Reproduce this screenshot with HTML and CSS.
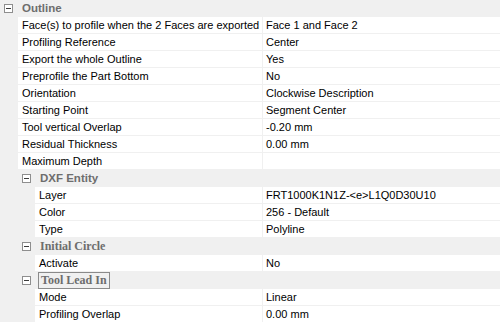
FILE: index.html
```html
<!doctype html>
<html lang="en">
<head>
  <meta charset="utf-8">
  <title>Outline properties</title>
  <link rel="stylesheet" href="styles.css">
</head>
<body>
<div class="grid">
  <div class="cat"><span class="tog"></span><span class="cat-name">Outline</span></div>
  <div class="row"><div class="name">Face(s) to profile when the 2 Faces are exported</div><div class="val">Face 1 and Face 2</div></div>
  <div class="row"><div class="name">Profiling Reference</div><div class="val">Center</div></div>
  <div class="row"><div class="name">Export the whole Outline</div><div class="val">Yes</div></div>
  <div class="row"><div class="name">Preprofile the Part Bottom</div><div class="val">No</div></div>
  <div class="row"><div class="name">Orientation</div><div class="val">Clockwise Description</div></div>
  <div class="row"><div class="name">Starting Point</div><div class="val">Segment Center</div></div>
  <div class="row"><div class="name">Tool vertical Overlap</div><div class="val">-0.20 mm</div></div>
  <div class="row"><div class="name">Residual Thickness</div><div class="val">0.00 mm</div></div>
  <div class="row"><div class="name">Maximum Depth</div><div class="val"></div></div>

  <div class="cat sub"><span class="tog"></span><span class="cat-name">DXF Entity</span></div>
  <div class="row sub"><div class="name">Layer</div><div class="val">FRT1000K1N1Z-&lt;e&gt;L1Q0D30U10</div></div>
  <div class="row sub"><div class="name">Color</div><div class="val">256 - Default</div></div>
  <div class="row sub"><div class="name">Type</div><div class="val">Polyline</div></div>

  <div class="cat sub"><span class="tog"></span><span class="cat-name serif">Initial Circle</span></div>
  <div class="row sub"><div class="name">Activate</div><div class="val">No</div></div>

  <div class="cat sub"><span class="tog"></span><span class="cat-name serif focus">Tool Lead In</span></div>
  <div class="row sub"><div class="name">Mode</div><div class="val">Linear</div></div>
  <div class="row sub"><div class="name">Profiling Overlap</div><div class="val">0.00 mm</div></div>
</div>
</body>
</html>
```
FILE: styles.css
```css
* {
  box-sizing: border-box;
  margin: 0;
  padding: 0;
}
body {
  background: #f0f0f0;
  font-family: 'Liberation Sans', Arial, sans-serif;
  font-size: 11px;
  color: #000;
}
.grid {
  display: flex;
  flex-direction: column;
}
.cat {
  height: 17px;
  display: flex;
  align-items: center;
  padding-left: 4px;
  gap: 9px;
}
.cat.sub {
  padding-left: 22px;
}
.tog {
  width: 9px;
  height: 9px;
  border: 1px solid #8e8e8e;
  background: #fff;
  position: relative;
}
.tog::after {
  content: '';
  position: absolute;
  left: 1px;
  top: 3px;
  width: 5px;
  height: 1px;
  background: #3c3c3c;
}
.cat-name {
  font-size: 11.5px;
  font-weight: bold;
  color: #6d6d6d;
  line-height: 15px;
}
.cat-name.serif {
  font-family: 'Liberation Serif', serif;
  font-size: 12px;
}
.cat-name.focus {
  border: 1px solid #8a8a8a;
  padding: 0 2px;
  margin-left: -2px;
}
.row {
  height: 17px;
  display: grid;
  grid-template-columns: 244px 1fr;
  column-gap: 1px;
  padding-left: 18px;
  padding-bottom: 1px;
}
.row.sub {
  grid-template-columns: 227px 1fr;
  padding-left: 35px;
}
.name, .val {
  background: #fff;
  padding-left: 4px;
  padding-top: 1px;
  line-height: 15px;
  white-space: nowrap;
  overflow: hidden;
}
.val {
  padding-left: 3px;
}
```
